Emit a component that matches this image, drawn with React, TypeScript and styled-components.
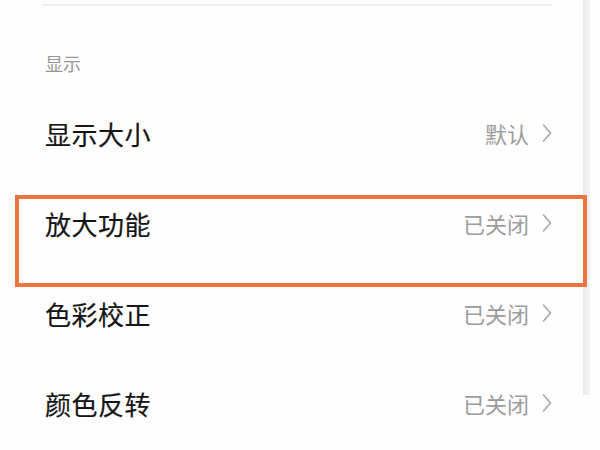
import styled, { createGlobalStyle } from "styled-components";

const GlobalStyle = createGlobalStyle`
  html,
  body {
    margin: 0;
    padding: 0;
    background: #fefefe;
  }

  body {
    font-family: "Noto Sans CJK SC", "Noto Sans", sans-serif;
  }
`;

const Screen = styled.div`
  position: relative;
  width: 600px;
  height: 450px;
  overflow: hidden;
  background: #fefefe;
`;

const Divider = styled.div`
  height: 2px;
  margin: 4px 48px 0 42px;
  background: #efefef;
`;

const SectionTitle = styled.div`
  display: flex;
  align-items: flex-end;
  height: 82px;
  padding: 0 0 16px 45px;
  box-sizing: border-box;
  font-size: 18px;
  line-height: 18px;
  color: #969696;
`;

const Row = styled.div`
  position: relative;
  display: flex;
  align-items: center;
  justify-content: space-between;
  height: 90px;
  padding: 0 48px 0 45px;
`;

const Label = styled.span`
  font-size: 26px;
  font-weight: 400;
  color: #151515;
  letter-spacing: 0.5px;
  -webkit-text-stroke: 0.2px #151515;
`;

const Trailing = styled.div`
  display: flex;
  align-items: center;
  gap: 13px;
`;

const Value = styled.span`
  font-size: 22px;
  color: #9c9c9c;
`;

// orange frame drawn around the selected row, above the scrollbar
const Highlight = styled.div`
  position: absolute;
  z-index: 2;
  left: 15px;
  right: 13px;
  top: 17px;
  bottom: -19px;
  border: 4px solid #eb7440;
  pointer-events: none;
`;

const Scrollbar = styled.div`
  position: absolute;
  z-index: 1;
  top: 0;
  right: 10px;
  width: 7px;
  height: 395px;
  background: linear-gradient(to right, #e8e8e8, #f4f4f4);
`;

const Chevron = () => (
  <svg width="10" height="20" viewBox="0 0 10 20">
    <polyline
      points="1.5,2 8.5,10 1.5,18"
      fill="none"
      stroke="#a8a8a8"
      strokeWidth="1.6"
      strokeLinecap="round"
      strokeLinejoin="round"
    />
  </svg>
);

const rows = [
  { id: 1, label: "显示大小", value: "默认", active: false },
  { id: 2, label: "放大功能", value: "已关闭", active: true },
  { id: 3, label: "色彩校正", value: "已关闭", active: false },
  { id: 4, label: "颜色反转", value: "已关闭", active: false },
];

export default function App() {
  return (
    <>
      <GlobalStyle />
      <Screen>
        <Divider />
        <SectionTitle>显示</SectionTitle>
        {rows.map((row) => (
          <Row key={row.id}>
            <Label>{row.label}</Label>
            <Trailing>
              <Value>{row.value}</Value>
              <Chevron />
            </Trailing>
            {row.active && <Highlight />}
          </Row>
        ))}
        <Scrollbar />
      </Screen>
    </>
  );
}
